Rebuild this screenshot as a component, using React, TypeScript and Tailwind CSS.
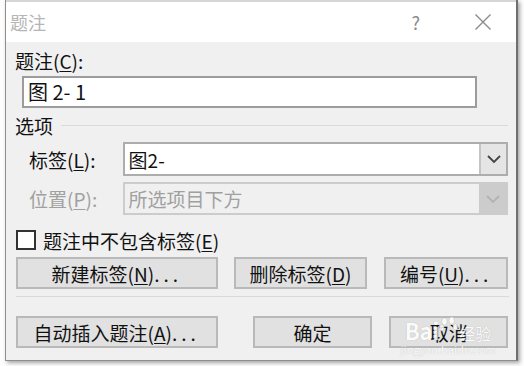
import React from 'react';

const font = "font-['Noto_Sans_CJK_SC','Noto_Sans',sans-serif]";

const U: React.FC<{ children: React.ReactNode }> = ({ children }) => (
  <span className="underline underline-offset-2">{children}</span>
);

const Dots = () => <span className="tracking-[4px]">...</span>;

const Chevron: React.FC<{ color: string }> = ({ color }) => (
  <svg width="16" height="10" viewBox="0 0 16 10" fill="none">
    <path d="M2 2l6 6 6-6" stroke={color} strokeWidth="1.8" />
  </svg>
);

const Button: React.FC<{ className: string; children: React.ReactNode }> = ({ className, children }) => (
  <div
    className={`h-[32px] flex items-center justify-center bg-[#e1e1e1] border-2 border-[#b9b9b9] text-[19px] leading-none text-[#111] ${className}`}
  >
    {children}
  </div>
);

const App: React.FC = () => {
  return (
    <div className={`relative w-[524px] h-[366px] bg-[#fdfdfd] overflow-hidden ${font}`}>
      {/* dialog */}
      <div className="ml-[5px] w-[513px] h-[361px] border-l border-r-2 border-b border-[#8e8e8e] border-r-[#6f6f6f] flex flex-col shadow-[2px_2px_4px_rgba(0,0,0,0.35)]">
        {/* title bar */}
        <div className="h-[42px] bg-white border-t-2 border-[#d6d6d6] flex items-center pl-[4px] pr-[24px]">
          <span className="text-[18px] text-[#b5b5b5] leading-none">题注</span>
          <span className="ml-auto text-[18px] text-[#8a8a8a] leading-none">?</span>
          <svg className="ml-[54px]" width="18" height="18" viewBox="0 0 18 18">
            <path d="M1.5 1.5l15 15M16.5 1.5l-15 15" stroke="#8a8a8a" strokeWidth="1.4" />
          </svg>
        </div>

        {/* body */}
        <div className="flex-1 bg-[#f0f0f0] pl-[9px] pr-[8px] flex flex-col text-[#111]">
          <div className="mt-[7px] h-[24px] text-[19px] leading-[24px]">
            题注(<U>C</U>):
          </div>
          <div className="mt-[3px] ml-[7px] w-[455px] h-[32px] bg-white border-2 border-[#9c9c9c] flex items-center pl-[4px] text-[20px] leading-none">
            图 2- 1
          </div>

          <div className="mt-[5px] h-[24px] flex items-center">
            <span className="text-[19px] leading-none">选项</span>
            <div className="ml-[8px] flex-1 h-[1px] bg-[#dadada]" />
          </div>

          <div className="mt-[5px] h-[34px] flex items-center">
            <span className="ml-[14px] w-[94px] text-[19px] leading-none">
              标签(<U>L</U>):
            </span>
            <div className="w-[387px] h-[34px] bg-white border-2 border-[#adadad] flex items-center">
              <span className="pl-[4px] text-[19px] leading-none">图2-</span>
              <div className="ml-auto w-[27px] h-full bg-[#e5e5e5] border-l-2 border-[#c4c4c4] flex items-center justify-center">
                <Chevron color="#444" />
              </div>
            </div>
          </div>

          <div className="mt-[6px] h-[33px] flex items-center text-[#a0a0a0]">
            <span className="ml-[14px] w-[94px] text-[19px] leading-none">
              位置(<U>P</U>):
            </span>
            <div className="w-[387px] h-[33px] bg-[#f0f0f0] border-2 border-[#cccccc] flex items-center">
              <span className="pl-[4px] text-[19px] leading-none">所选项目下方</span>
              <div className="ml-auto w-[27px] h-full bg-[#cccccc] flex items-center justify-center">
                <Chevron color="#b3b3b3" />
              </div>
            </div>
          </div>

          <div className="mt-[14px] h-[22px] flex items-center">
            <div className="ml-[1px] w-[20px] h-[20px] bg-white border-2 border-[#333]" />
            <span className="ml-[7px] text-[19px] leading-none">
              题注中不包含标签(<U>E</U>)
            </span>
          </div>

          <div className="mt-[6px] flex">
            <Button className="ml-[1px] w-[202px]">
              新建标签(<U>N</U>)<Dots />
            </Button>
            <Button className="ml-[16px] w-[134px]">
              删除标签(<U>D</U>)
            </Button>
            <Button className="ml-[17px] w-[124px]">
              编号(<U>U</U>)<Dots />
            </Button>
          </div>

          <div className="mt-[7px] ml-[1px] w-[493px] h-[1px] bg-[#d9d9d9]" />

          <div className="mt-[19px] flex">
            <Button className="ml-[1px] w-[202px]">
              自动插入题注(<U>A</U>)<Dots />
            </Button>
            <Button className="ml-[35px] w-[120px]">确定</Button>
            <Button className="ml-[17px] w-[119px]">取消</Button>
          </div>
        </div>
      </div>

      {/* watermark overlay */}
      <div className="absolute left-[402px] top-[316px] w-[92px] flex flex-col items-center text-white pointer-events-none opacity-85">
        <div className="flex items-end leading-none">
          <span className="text-[22px] font-bold [text-shadow:0_0_1px_#aaa]">Bai</span>
          <svg className="mb-[3px]" width="20" height="22" viewBox="0 0 22 24">
            <ellipse cx="6" cy="6" rx="3" ry="4" fill="#fff" stroke="#bbb" strokeWidth="0.6" />
            <ellipse cx="14" cy="5" rx="3" ry="4" fill="#fff" stroke="#bbb" strokeWidth="0.6" />
            <ellipse cx="3" cy="13" rx="2.6" ry="3.4" fill="#fff" stroke="#bbb" strokeWidth="0.6" />
            <ellipse cx="18" cy="12" rx="2.6" ry="3.4" fill="#fff" stroke="#bbb" strokeWidth="0.6" />
          </svg>
          <span className="text-[16px] [text-shadow:0_0_1px_#aaa]">经验</span>
        </div>
        <span className="text-[11px] leading-none mt-[3px] [text-shadow:0_0_1px_#aaa]">jingyan.baidu.com</span>
      </div>
    </div>
  );
};

export default App;
